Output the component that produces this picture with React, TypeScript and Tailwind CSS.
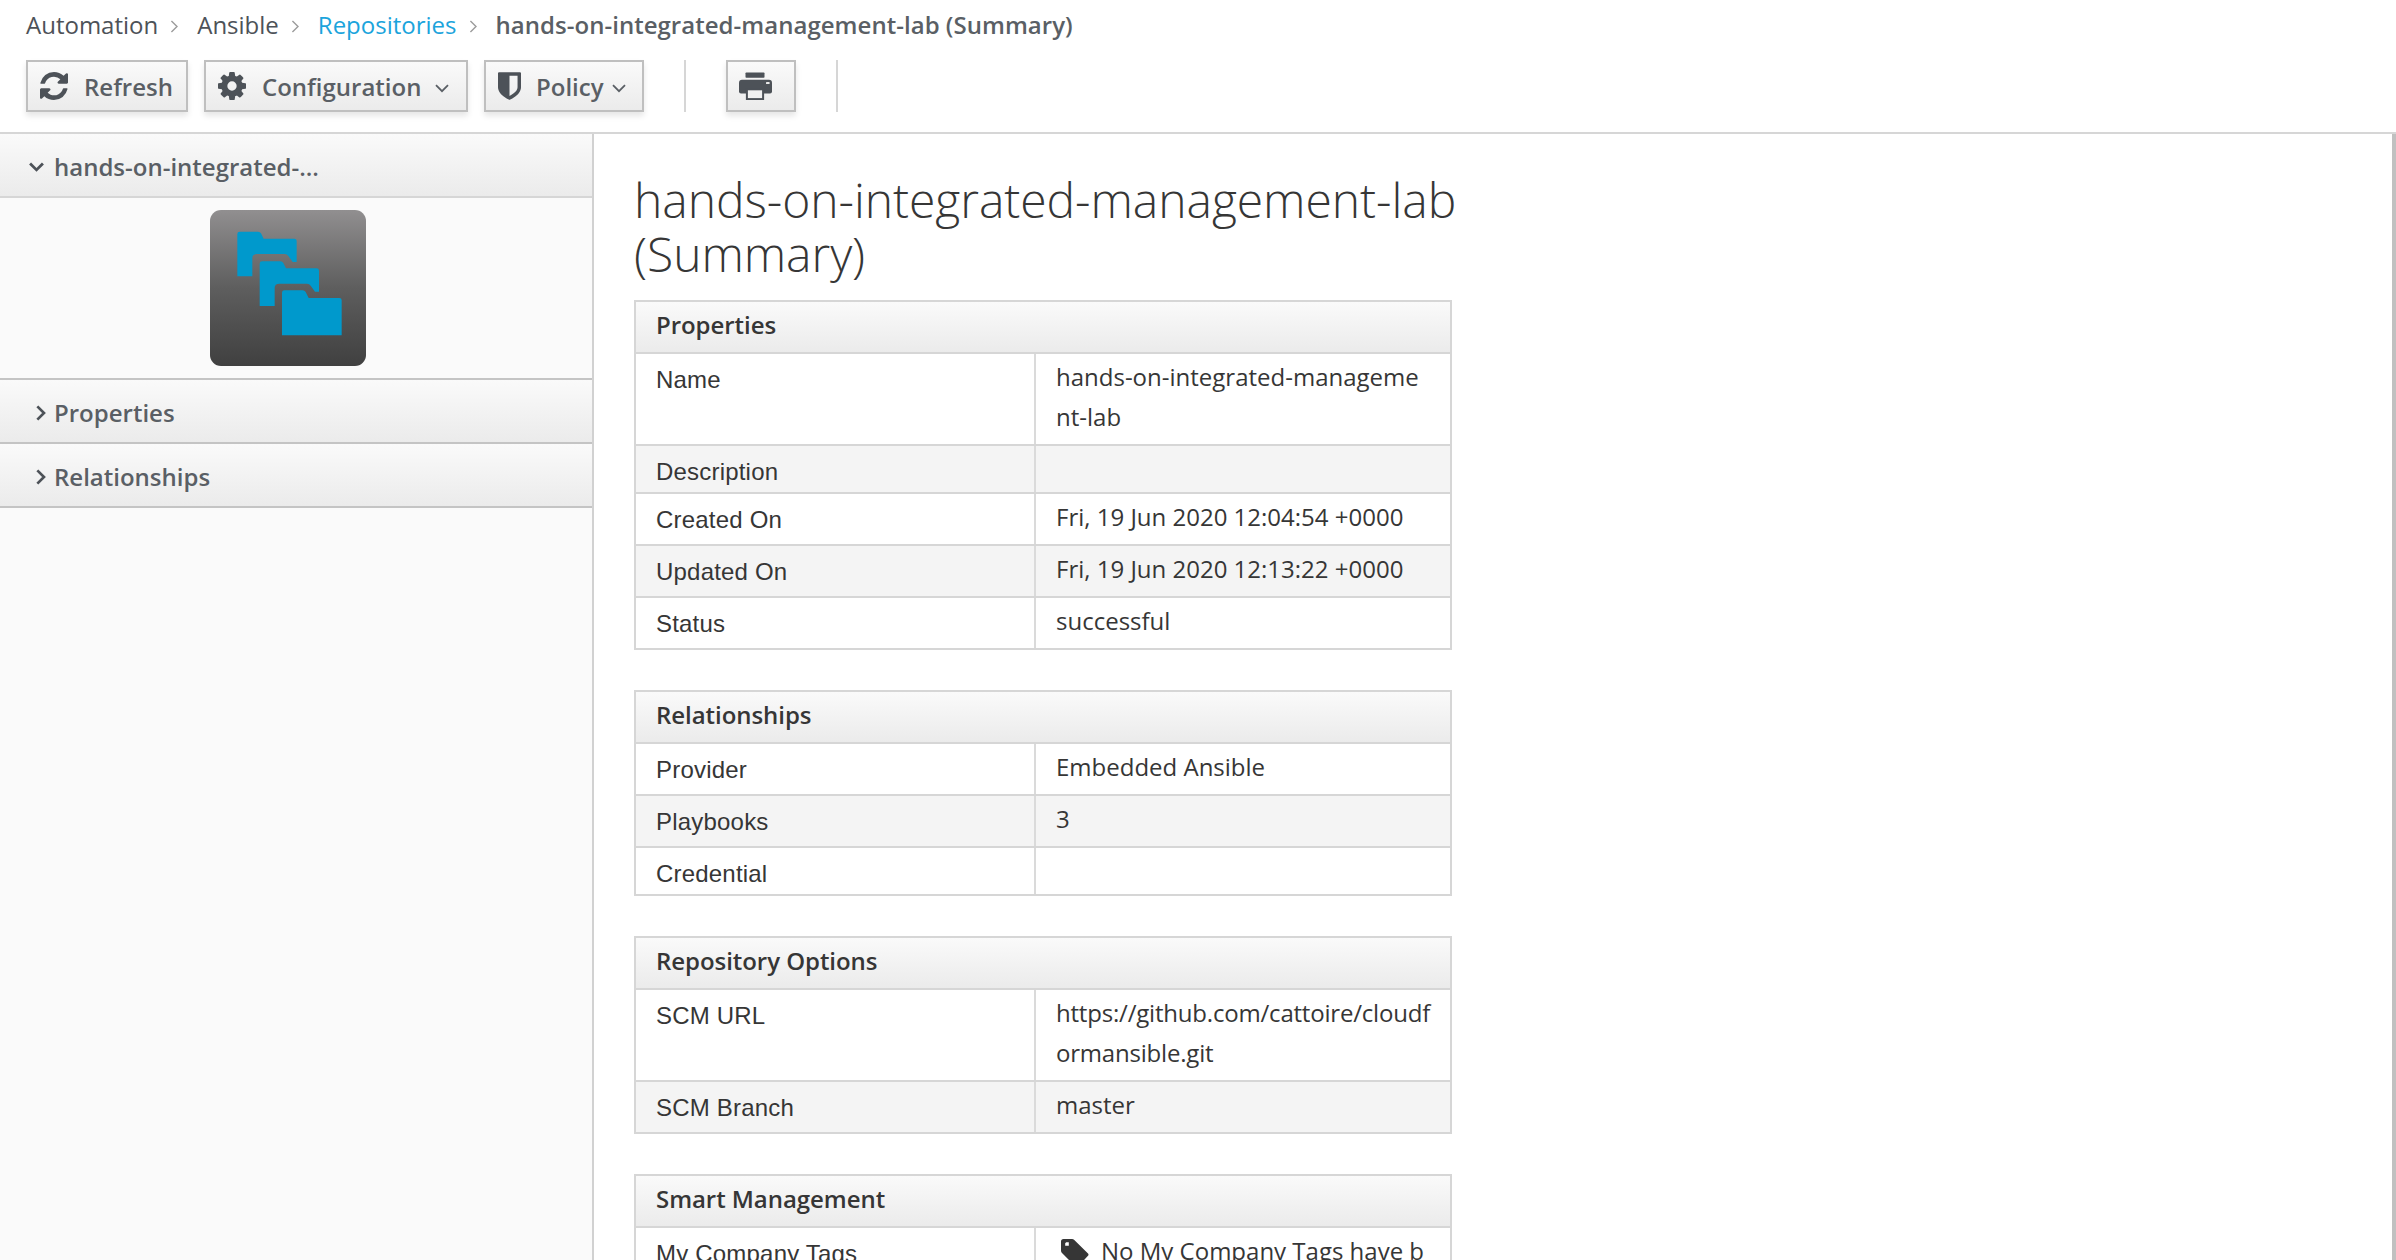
import type { ReactNode } from "react";

type IconProps = { className?: string };

function RefreshIcon({ className }: IconProps) {
  return (
    <svg viewBox="0 0 1536 1536" fill="currentColor" className={className}>
      <path d="M1511 928q0 5-1 7-64 268-268 434.5T764 1536q-146 0-282.500-55T238 1324l-129 129q-19 19-45 19t-45-19-19-45V960q0-26 19-45t45-19h448q26 0 45 19t19 45-19 45l-137 137q71 66 161 102t187 36q134 0 250-65t186-179q11-17 53-117 8-23 30-23h192q13 0 22.500 9.500t9.500 22.500zm25-800v448q0 26-19 45t-45 19h-448q-26 0-45-19t-19-45 19-45l138-138Q969 256 768 256q-134 0-250 65T332 500q-11 17-53 117-8 23-30 23H50q-13 0-22.500-9.500T18 608v-7q65-268 270-434.500T768 0q146 0 284 55.500T1297 212l130-129q19-19 45-19t45 19 19 45z" />
    </svg>
  );
}

function GearIcon({ className }: IconProps) {
  return (
    <svg viewBox="0 0 1536 1536" fill="currentColor" className={className}>
      <path d="M1024 768q0-106-75-181t-181-75-181 75-75 181 75 181 181 75 181-75 75-181zm512-109v222q0 12-8 23t-20 13l-185 28q-19 54-39 91 35 50 107 138 10 12 10 25t-9 23q-27 37-99 108t-94 71q-12 0-26-9l-138-108q-44 23-91 38-16 136-29 186-7 28-36 28H657q-14 0-24.500-8.500T621 1506l-28-184q-49-16-90-37l-141 107q-10 9-25 9-14 0-25-11-126-114-165-168-7-10-7-23 0-12 8-23 15-21 51-66.500t54-70.500q-27-50-41-99L29 913q-13-2-21-12.500T0 877V655q0-12 8-23t19-13l186-28q14-46 39-92-40-57-107-138-10-12-10-24 0-10 9-23 26-36 98.500-107.500T337 135q13 0 26 10l138 107q44-23 91-38 16-136 29-186 7-28 36-28h222q14 0 24.500 8.500T915 30l28 184q49 16 90 37l142-107q9-9 24-9 13 0 25 10 129 119 165 170 7 8 7 22 0 12-8 23-15 21-51 66.500t-54 70.500q26 50 41 98l183 28q13 2 21 12.500t8 23.500z" />
    </svg>
  );
}

function ShieldIcon({ className }: IconProps) {
  return (
    <svg viewBox="0 0 1280 1536" fill="currentColor" className={className}>
      <path d="M1088 832V192H640v1137q119-63 213-137 235-184 235-360zm192-768v768q0 86-33.500 170.500t-83 150-118 127.500-126.500 103-121 77.500-89.500 49.500-42.500 20q-12 6-26 6t-26-6q-16-7-42.500-20t-89.500-49.500-121-77.500-126.500-103-118-127.500-83-150T0 832V64q0-26 19-45T64 0h1152q26 0 45 19t19 45z" />
    </svg>
  );
}

function PrintIcon({ className }: IconProps) {
  return (
    <svg viewBox="0 0 33 28" className={className}>
      <rect x="6.5" y="0.500" width="19" height="5.200" rx="0.800" fill="#4d5258" />
      <path d="M3 7.800H30Q33 7.800 33 10.800V19.500Q33 21.500 31 21.500H2Q0 21.500 0 19.500V10.800Q0 7.800 3 7.800Z" fill="#4d5258" />
      <rect x="27" y="10" width="3.600" height="2" rx="0.600" fill="#e8e8e8" />
      <rect x="7.900" y="17.300" width="16.200" height="9.800" fill="#f1f1f1" stroke="#4d5258" strokeWidth="2" />
    </svg>
  );
}

function TagIcon({ className }: IconProps) {
  return (
    <svg viewBox="0 0 28 29" fill="#363636" className={className}>
      <path
        fillRule="evenodd"
        d="M2.500 0H11Q12.300 0 13.300 1L27 14.500Q28 15.700 27 16.800L17 27.500Q15.800 28.500 14.500 27.500L1 14Q0 13 0 11.500V2.500Q0 0 2.500 0ZM4.200 4.200V6.800H7.800V3.200H5.200Z"
      />
    </svg>
  );
}

function ChevronDown({ className, weight }: IconProps & { weight: number }) {
  return (
    <svg viewBox="0 0 14 9" fill="none" stroke="currentColor" strokeWidth={weight} className={className}>
      <path d="M1 1.200 7 7.200 13 1.200" />
    </svg>
  );
}

function ChevronRight({ className, weight }: IconProps & { weight: number }) {
  return (
    <svg viewBox="0 0 9 14" fill="none" stroke="currentColor" strokeWidth={weight} className={className}>
      <path d="M1.200 1 7.200 7 1.200 13" />
    </svg>
  );
}

function FoldersIcon({ className }: IconProps) {
  const backFolder =
    "M82 72Q82 65 89 65H144Q150 65 153 70L161 86H253Q260 86 260 93V156H248L235 138Q231 132 224 132H141Q127 132 127 145V199H82Z";
  return (
    <svg viewBox="0 0 468 468" fill="#0099cc" className={className}>
      <path d={backFolder} />
      <path d={backFolder} transform="translate(67 89)" />
      <path d="M216 248Q216 241 223 241H278Q284 241 287 246L296 264H388Q395 264 395 271V376H216Z" />
    </svg>
  );
}

function ToolbarButton({ className, children }: { className: string; children: ReactNode }) {
  return (
    <button
      className={
        "flex h-[52px] items-center border-2 border-[#bfbfbf] bg-linear-to-b from-[#fafafa] to-[#ebebeb] font-semibold text-[#5a5f65] shadow-[0_4px_6px_rgba(3,3,3,0.1)] " +
        className
      }
    >
      {children}
    </button>
  );
}

function Crumb({ children }: { children: ReactNode }) {
  return (
    <>
      {children}
      <ChevronRight weight={1.5} className="mt-[3px] mr-[18px] ml-[12px] h-[13px] w-[9px] shrink-0 text-[#9c9c9c]" />
    </>
  );
}

function PanelHeading({ title, open }: { title: string; open?: boolean }) {
  return (
    <div
      className={
        "flex h-[64px] border-b-2 bg-linear-to-b from-[#fafafa] to-[#ebebeb] pt-[16px] font-semibold text-[#5a5f65] " +
        (open ? "border-[#d6d6d6]" : "border-[#c4c4c4]")
      }
    >
      <span className="flex w-[54px] shrink-0 justify-end">
        {open ? (
          <ChevronDown weight={2.6} className="mt-[12px] mr-[10px] h-[10px] w-[15px] text-[#4d5258]" />
        ) : (
          <ChevronRight weight={2.4} className="mt-[9px] mr-[8px] h-[16px] w-[10px] text-[#4d5258]" />
        )}
      </span>
      {title}
    </div>
  );
}

type Row = { label: string; value?: ReactNode; height: "short" | "normal" | "tall" };

const rowHeights = {
  short: "h-[48px]",
  normal: "h-[52px]",
  tall: "h-[92px]",
};

const sections: { title: string; rows: Row[] }[] = [
  {
    title: "Properties",
    rows: [
      { label: "Name", value: "hands-on-integrated-management-lab", height: "tall" },
      { label: "Description", height: "short" },
      { label: "Created On", value: "Fri, 19 Jun 2020 12:04:54 +0000", height: "normal" },
      { label: "Updated On", value: "Fri, 19 Jun 2020 12:13:22 +0000", height: "normal" },
      { label: "Status", value: "successful", height: "normal" },
    ],
  },
  {
    title: "Relationships",
    rows: [
      { label: "Provider", value: "Embedded Ansible", height: "normal" },
      { label: "Playbooks", value: "3", height: "normal" },
      { label: "Credential", height: "short" },
    ],
  },
  {
    title: "Repository Options",
    rows: [
      {
        label: "SCM URL",
        value: <span className="tracking-[-0.2px]">https://github.com/cattoire/cloudformansible.git</span>,
        height: "tall",
      },
      { label: "SCM Branch", value: "master", height: "normal" },
    ],
  },
  {
    title: "Smart Management",
    rows: [
      {
        label: "My Company Tags",
        value: (
          <span className="flex whitespace-nowrap">
            <TagIcon className="mt-[8px] mr-[12px] ml-[5px] h-[29px] w-[28px] shrink-0" />
            No My Company Tags have b
          </span>
        ),
        height: "tall",
      },
    ],
  },
];

function SummaryTable({ title, rows }: { title: string; rows: Row[] }) {
  return (
    <section className="w-[818px] border-x-2 border-t-2 border-[#d6d6d6] text-[#363636]">
      <h2 className="h-[52px] border-b-2 border-[#d6d6d6] bg-linear-to-b from-[#fafafa] to-[#ebebeb] pl-[20px] leading-[45px] font-semibold tracking-[-0.05px]">
        {title}
      </h2>
      {rows.map((row, i) => (
        <div
          key={row.label}
          className={
            "grid grid-cols-[400px_1fr] border-b-2 border-[#d6d6d6] leading-[40px] " +
            rowHeights[row.height] +
            (i % 2 === 1 ? " bg-[#f4f4f4]" : " bg-white")
          }
        >
          <div className="border-r-2 border-[#dadada] pt-[6px] pl-[20px] font-['Liberation_Sans',sans-serif] tracking-[0.2px]">
            {row.label}
          </div>
          <div className="pt-[3px] pr-[18px] pl-[20px] break-all">{row.value}</div>
        </div>
      ))}
    </section>
  );
}

export default function App() {
  return (
    <div className="flex h-[1260px] w-[2396px] flex-col overflow-hidden bg-white font-['Open_Sans',sans-serif] text-[24px] leading-[33px] text-[#4d5258]">
      <header className="h-[134px] shrink-0 border-b-2 border-[#d6d6d6] pl-[26px]">
        <nav className="flex items-center pt-[8px]">
          <Crumb>
            <span>Automation</span>
          </Crumb>
          <Crumb>
            <span>Ansible</span>
          </Crumb>
          <Crumb>
            <a className="text-[#1ba4dc]">Repositories</a>
          </Crumb>
          <span className="font-semibold tracking-[0.03px] text-[#5a5f65]">hands-on-integrated-management-lab (Summary)</span>
        </nav>
        <div className="flex pt-[19px]">
          <ToolbarButton className="w-[162px] pl-[12px]">
            <RefreshIcon className="mr-[16px] h-[28px] w-[28px] text-[#4d5258]" />
            Refresh
          </ToolbarButton>
          <ToolbarButton className="ml-[16px] w-[264px] pl-[12px]">
            <GearIcon className="mr-[16px] h-[28px] w-[28px] text-[#4d5258]" />
            Configuration
            <ChevronDown weight={1.8} className="mt-[4px] ml-[14px] h-[9px] w-[14px]" />
          </ToolbarButton>
          <ToolbarButton className="ml-[16px] w-[160px] pl-[12px]">
            <ShieldIcon className="mr-[15px] h-[28px] w-[23px] text-[#4d5258]" />
            Policy
            <ChevronDown weight={1.8} className="mt-[4px] ml-[8px] h-[9px] w-[14px]" />
          </ToolbarButton>
          <div className="ml-[40px] h-[52px] w-[2px] bg-[#d6d6d6]" />
          <ToolbarButton className="ml-[40px] w-[70px] pl-[11px]">
            <PrintIcon className="h-[28px] w-[33px]" />
          </ToolbarButton>
          <div className="ml-[40px] h-[52px] w-[2px] bg-[#d6d6d6]" />
        </div>
      </header>
      <div className="flex min-h-0 flex-1">
        <aside className="w-[594px] shrink-0 border-r-2 border-[#d1d1d1] bg-[#fafafa]">
          <PanelHeading title="hands-on-integrated-..." open />
          <div className="flex h-[182px] justify-center border-b-2 border-[#c4c4c4] pt-[12px] pr-[16px]">
            <div className="h-[156px] w-[156px] rounded-[11px] bg-linear-to-b from-[#918f90] via-[#5e5e5e] to-[#404040]">
              <FoldersIcon className="h-full w-full" />
            </div>
          </div>
          <PanelHeading title="Properties" />
          <PanelHeading title="Relationships" />
        </aside>
        <main className="min-w-0 flex-1 overflow-hidden pt-[39px] pl-[40px]">
          <h1 className="mb-[19px] w-[860px] text-[48px] leading-[54px] font-light tracking-[-0.05px] text-[#363636]">
            hands-on-integrated-management-lab
            <br />
            (Summary)
          </h1>
          <div className="flex flex-col gap-[40px]">
            {sections.map((s) => (
              <SummaryTable key={s.title} title={s.title} rows={s.rows} />
            ))}
          </div>
        </main>
        <div className="w-[4px] shrink-0 bg-[#c0c0c0]" />
      </div>
    </div>
  );
}
